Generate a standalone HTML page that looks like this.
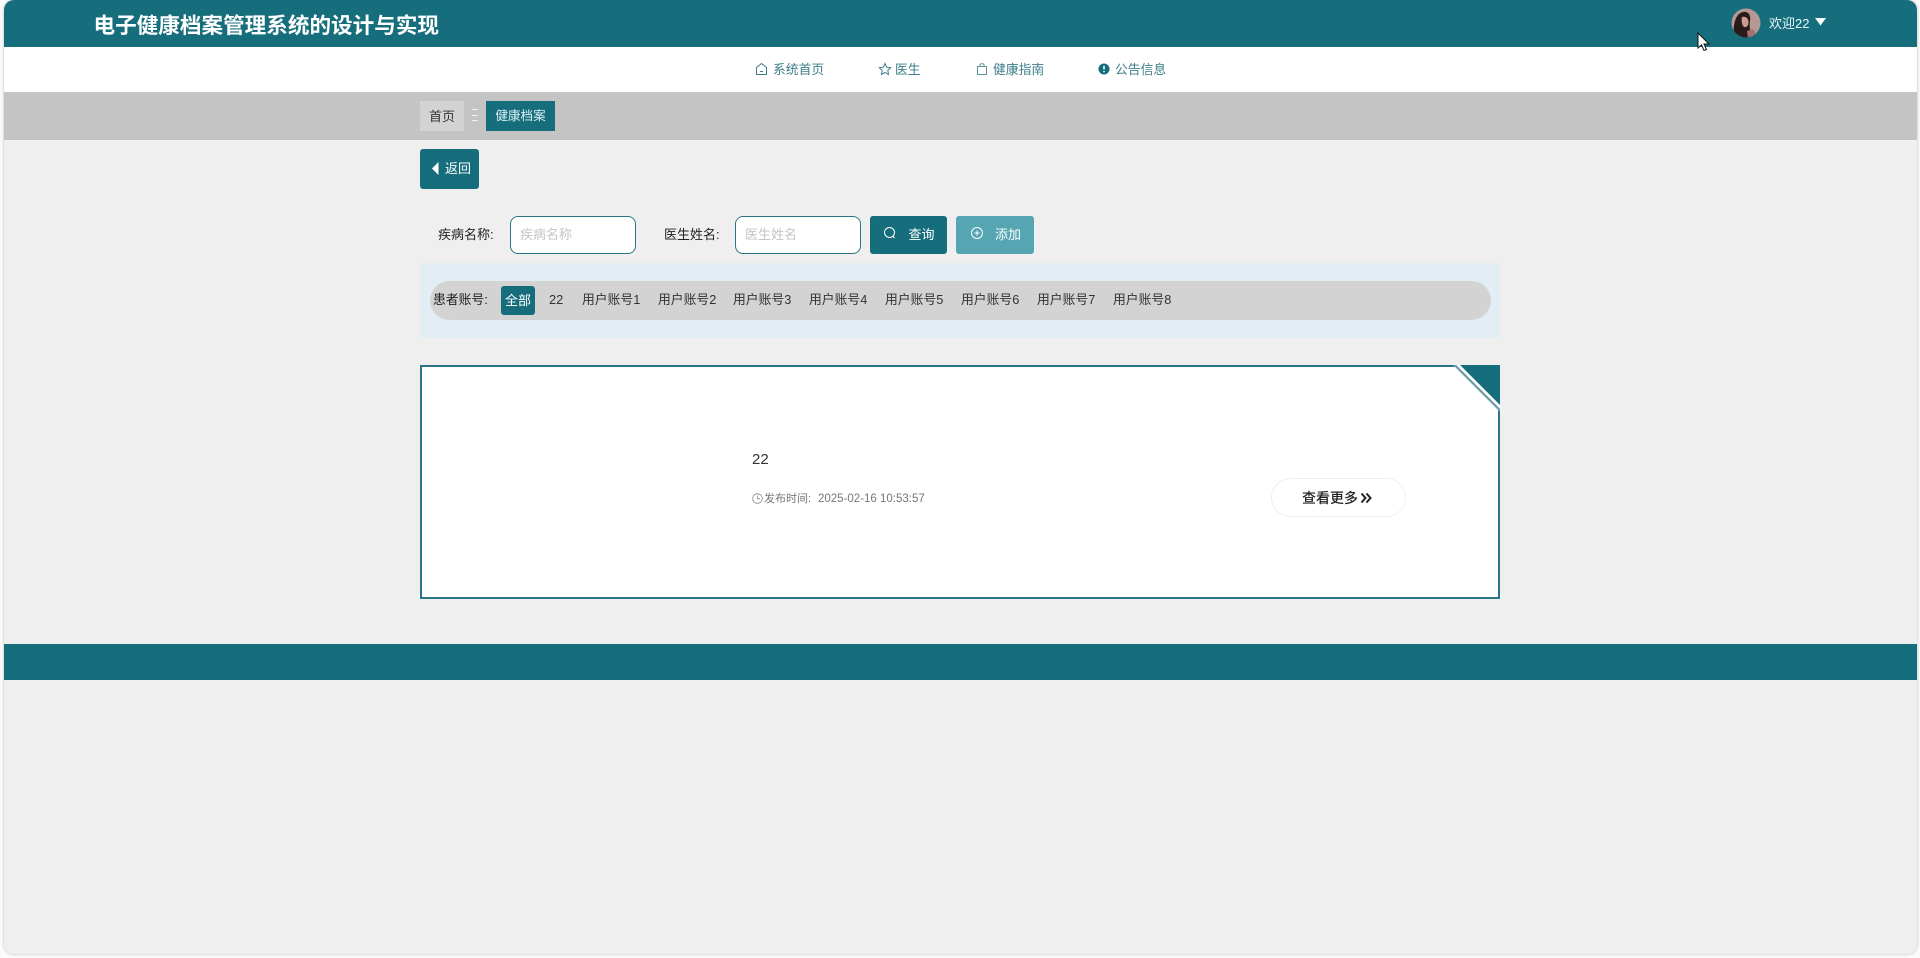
<!DOCTYPE html>
<html lang="zh-CN">
<head>
<meta charset="utf-8">
<title>电子健康档案管理系统的设计与实现</title>
<style>
html,body{margin:0;padding:0;width:1920px;height:958px;overflow:hidden;background:#fbfbfb;}
body{position:relative;font-family:"Liberation Sans","Noto Sans CJK SC",sans-serif;font-size:13px;color:#333;}
.a{position:absolute;white-space:nowrap;}
#win{position:absolute;left:3.5px;top:0;width:1913px;height:954px;background:#efefef;border-radius:10px;overflow:hidden;box-shadow:0 0 3px rgba(0,0,0,.25);}
.bar{position:absolute;left:3.5px;width:1913px;}
.nav{color:#3c7d8a;line-height:20px;top:60px;font-size:12.8px;}
.lbl{color:#222;font-size:13px;line-height:20px;}
.inp{box-sizing:border-box;height:38px;top:216px;background:#fff;border:1px solid #2a7685;border-radius:8px;color:#c4c4c4;font-size:13px;line-height:36px;padding-left:9px;}
.btn{top:216px;height:38px;border-radius:3px;color:#fff;font-size:13px;line-height:36px;}
.it{top:290px;line-height:20px;font-size:12.8px;color:#333;}
</style>
</head>
<body>
<div id="win"></div>

<!-- header -->
<div class="bar" style="top:0;height:47px;background:#166e7d;border-radius:10px 10px 0 0;"></div>
<div class="a" style="left:93.500px;top:10px;font-size:21.6px;line-height:32px;font-weight:700;color:#fff;">电子健康档案管理系统的设计与实现</div>
<svg class="a" style="left:1731px;top:8px;" width="30" height="30" viewBox="0 0 30 30">
<defs><clipPath id="c"><circle cx="15" cy="15" r="14.5"/></clipPath></defs>
<g clip-path="url(#c)">
<rect width="30" height="30" fill="#b59a94"/>
<path d="M3 30C2 20 3 6 12 4C18 3 20 8 19 13C18 20 20 26 21 30Z" fill="#2a1a1c"/>
<path d="M11 9C15 8 18 11 17.500 15C17 19 14 20 12.500 18.500C11 17 10 12 11 9Z" fill="#c99c8f"/>
<path d="M16 23L22 21L27 30H17Z" fill="#a5716c"/>
</g>
</svg>
<div class="a" style="left:1769px;top:14px;line-height:20px;font-size:13px;color:#e9f6f8;">欢迎22</div>
<svg class="a" style="left:1815px;top:18px;" width="11" height="8" viewBox="0 0 11 8"><path d="M0 0H11L5.500 7.500Z" fill="#fff"/></svg>

<!-- nav -->
<div class="bar" style="top:47px;height:45px;background:#fff;"></div>
<svg class="a" style="left:755px;top:62px;" width="13" height="14" viewBox="0 0 13 14" fill="none" stroke="#3c7d8a" stroke-width="1"><path d="M1.500 5.500L6.500 1.500L11.500 5.500V12.500H1.500Z"/><path d="M5 9.500H8"/></svg>
<div class="a nav" style="left:773px;">系统首页</div>
<svg class="a" style="left:877.500px;top:61.500px;" width="14" height="14" viewBox="0 0 14 14" fill="none" stroke="#3c7d8a" stroke-width="1"><path d="M7 1.500L8.700 5.200L12.700 5.700L9.800 8.400L10.500 12.400L7 10.400L3.500 12.400L4.200 8.400L1.300 5.700L5.300 5.200Z"/></svg>
<div class="a nav" style="left:895px;">医生</div>
<svg class="a" style="left:975.500px;top:61.500px;" width="12" height="14" viewBox="0 0 12 14" fill="none" stroke="#5d929d" stroke-width="1"><path d="M1.500 4.500H10.500V12.500H1.500Z"/><path d="M4 4.500V2.500C4 1.500 8 1.500 8 2.500V4.500"/></svg>
<div class="a nav" style="left:993px;">健康指南</div>
<svg class="a" style="left:1098px;top:63px;" width="12" height="12" viewBox="0 0 12 12"><circle cx="6" cy="6" r="5.500" fill="#166e7d"/><path d="M6 2.800V6.500M6 8V9.300" stroke="#fff" stroke-width="1.500"/></svg>
<div class="a nav" style="left:1115px;">公告信息</div>

<!-- breadcrumb -->
<div class="bar" style="top:92px;height:48px;background:#c4c4c4;"></div>
<div class="a" style="left:420px;top:101px;width:44px;height:30px;background:#d3d3d3;text-align:center;line-height:31px;font-size:13px;color:#333;">首页</div>
<div class="a" style="left:472px;top:109px;width:6px;height:12px;border-top:1px solid #f3f3f3;border-bottom:1px solid #f3f3f3;box-sizing:border-box;"></div>
<div class="a" style="left:472px;top:114.500px;width:6px;height:1px;background:#f3f3f3;"></div>
<div class="a" style="left:486px;top:101px;width:69px;height:30px;background:#166e7d;text-align:center;line-height:31px;font-size:12.6px;color:#dff1f4;">健康档案</div>

<!-- back -->
<div class="a" style="left:420px;top:149px;width:59px;height:40px;background:#166e7d;border-radius:3px;"></div>
<svg class="a" style="left:432px;top:162px;" width="7" height="13" viewBox="0 0 7 13"><path d="M6.500 0V13L0 6.500Z" fill="#fff"/></svg>
<div class="a" style="left:445px;top:159px;color:#fff;font-size:13px;line-height:20px;">返回</div>

<!-- search -->
<div class="a lbl" style="left:438px;top:224.500px;font-size:13px;">疾病名称:</div>
<div class="a inp" style="left:510px;width:126px;">疾病名称</div>
<div class="a lbl" style="left:664px;top:224.500px;">医生姓名:</div>
<div class="a inp" style="left:735px;width:126px;">医生姓名</div>
<div class="a btn" style="left:870px;width:77px;background:#166e7d;"></div>
<svg class="a" style="left:883px;top:226px;" width="14" height="14" viewBox="0 0 14 14" fill="none" stroke="#fff" stroke-width="1"><circle cx="6.500" cy="6.500" r="5"/><path d="M10 10.500L11.500 12"/></svg>
<div class="a" style="left:908.500px;top:224.500px;color:#fff;font-size:13px;line-height:20px;">查询</div>
<div class="a btn" style="left:956px;width:78px;background:#55a5b3;"></div>
<svg class="a" style="left:970px;top:226px;" width="14" height="14" viewBox="0 0 14 14" fill="none" stroke="#fff" stroke-width="1"><circle cx="7" cy="7" r="5.500"/><path d="M4.500 7H9.500M7 4.500V9.500"/></svg>
<div class="a" style="left:995px;top:224.500px;color:#fff;font-size:13px;line-height:20px;">添加</div>

<!-- filter -->
<div class="a" style="left:420px;top:263px;width:1080px;height:75px;background:#e2eef4;border-radius:4px;"></div>
<div class="a" style="left:430px;top:281px;width:1061px;height:39px;background:#d3d3d3;border-radius:20px;"></div>
<div class="a it" style="left:433px;color:#222;">患者账号:</div>
<div class="a" style="left:501px;top:286px;width:34px;height:29px;background:#166e7d;border-radius:3px;color:#fff;font-size:13px;line-height:29px;text-align:center;">全部</div>
<div class="a it" style="left:549px;">22</div>
<div class="a it" style="left:582px;">用户账号1</div>
<div class="a it" style="left:658px;">用户账号2</div>
<div class="a it" style="left:733px;">用户账号3</div>
<div class="a it" style="left:809px;">用户账号4</div>
<div class="a it" style="left:885px;">用户账号5</div>
<div class="a it" style="left:961px;">用户账号6</div>
<div class="a it" style="left:1037px;">用户账号7</div>
<div class="a it" style="left:1113px;">用户账号8</div>

<!-- card -->
<svg class="a" style="left:420px;top:365px;" width="1080" height="234" viewBox="0 0 1080 234">
<path d="M1 1H1036L1079 44V233H1Z" fill="#fff" stroke="#2a7685" stroke-width="2"/>
<path d="M1036 0H1080V44Z" fill="#fff"/>
<path d="M1040 0H1080V40Z" fill="#166e7d"/>
<path d="M1034 0L1080 46" stroke="#7fabb4" stroke-width="1.500" fill="none"/>
</svg>
<div class="a" style="left:752px;top:449.500px;font-size:15px;line-height:20px;color:#333;">22</div>
<svg class="a" style="left:752px;top:493px;" width="11" height="11" viewBox="0 0 11 11" fill="none" stroke="#888" stroke-width=".8"><circle cx="5.500" cy="5.500" r="4.800"/><path d="M5.500 2.500V5.700H8"/></svg>
<div class="a" style="left:764px;top:489px;font-size:11px;line-height:20px;color:#777;">发布时间:</div>
<div class="a" style="left:818px;top:489px;font-size:11.5px;line-height:20px;color:#777;">2025-02-16 10:53:57</div>
<div class="a" style="left:1271px;top:478px;width:135px;height:39px;box-sizing:border-box;background:#fff;border:1px solid #efefef;border-radius:20px;"></div>
<div class="a" style="left:1302px;top:488px;font-size:14px;line-height:20px;color:#222;font-weight:500;">查看更多</div>
<svg class="a" style="left:1360px;top:492px;" width="12" height="12" viewBox="0 0 12 12" fill="none" stroke="#222" stroke-width="2"><path d="M1.500 1.500L5.500 6L1.500 10.500M6.500 1.500L10.500 6L6.500 10.500"/></svg>

<!-- footer -->
<div class="bar" style="top:644px;height:36px;background:#166e7d;"></div>

<!-- cursor -->
<svg class="a" style="left:1697px;top:32px;" width="14" height="21" viewBox="0 0 14 21"><path d="M1 1V16L4.500 12.800L7 18.500L9.500 17.500L7 12H12Z" fill="#fff" stroke="#111" stroke-width="1"/></svg>
</body>
</html>
